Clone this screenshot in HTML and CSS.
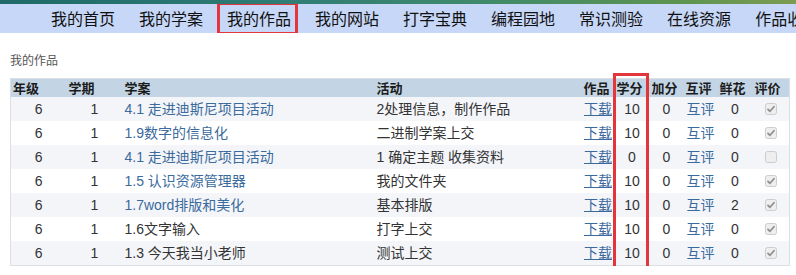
FILE: index.html
```html
<!DOCTYPE html>
<html lang="zh-CN">
<head>
<meta charset="utf-8">
<title>我的作品</title>
<link rel="stylesheet" href="styles.css">
</head>
<body>
<div class="topstrip"></div>
<nav class="nav">
  <a href="#">我的首页</a>
  <a href="#">我的学案</a>
  <a href="#" class="active">我的作品</a>
  <a href="#">我的网站</a>
  <a href="#">打字宝典</a>
  <a href="#">编程园地</a>
  <a href="#">常识测验</a>
  <a href="#">在线资源</a>
  <a href="#">作品收藏</a>
</nav>
<main class="content">
  <div class="crumb">我的作品</div>
  <div class="tablewrap">
    <table class="works">
      <colgroup>
        <col class="c1"><col class="c2"><col class="c3"><col class="c4"><col class="c5">
        <col class="c6"><col class="c7"><col class="c8"><col class="c9"><col class="c10">
      </colgroup>
      <thead>
        <tr><th>年级</th><th>学期</th><th>学案</th><th>活动</th><th>作品</th><th>学分</th><th>加分</th><th>互评</th><th>鲜花</th><th>评价</th></tr>
      </thead>
      <tbody>
        <tr><td class="num">6</td><td class="num">1</td><td class="txt"><a href="#">4.1 走进迪斯尼项目活动</a></td><td class="txt">2处理信息，制作作品</td><td class="num"><a href="#" class="u">下载</a></td><td class="num">10</td><td class="num">0</td><td class="num"><a href="#">互评</a></td><td class="num">0</td><td class="num"><svg class="chk" viewBox="0 0 12 12"><rect x=".5" y=".5" width="11" height="11" rx="2" class="box"/><path d="M3 6.3l2 2 4-4.6" class="tick"/></svg></td></tr>
        <tr><td class="num">6</td><td class="num">1</td><td class="txt"><a href="#">1.9数字的信息化</a></td><td class="txt">二进制学案上交</td><td class="num"><a href="#" class="u">下载</a></td><td class="num">10</td><td class="num">0</td><td class="num"><a href="#">互评</a></td><td class="num">0</td><td class="num"><svg class="chk" viewBox="0 0 12 12"><rect x=".5" y=".5" width="11" height="11" rx="2" class="box"/><path d="M3 6.3l2 2 4-4.6" class="tick"/></svg></td></tr>
        <tr><td class="num">6</td><td class="num">1</td><td class="txt"><a href="#">4.1 走进迪斯尼项目活动</a></td><td class="txt">1 确定主题 收集资料</td><td class="num"><a href="#" class="u">下载</a></td><td class="num">0</td><td class="num">0</td><td class="num"><a href="#">互评</a></td><td class="num">0</td><td class="num"><svg class="chk" viewBox="0 0 12 12"><rect x=".5" y=".5" width="11" height="11" rx="2" class="box"/></svg></td></tr>
        <tr><td class="num">6</td><td class="num">1</td><td class="txt"><a href="#">1.5 认识资源管理器</a></td><td class="txt">我的文件夹</td><td class="num"><a href="#" class="u">下载</a></td><td class="num">10</td><td class="num">0</td><td class="num"><a href="#">互评</a></td><td class="num">0</td><td class="num"><svg class="chk" viewBox="0 0 12 12"><rect x=".5" y=".5" width="11" height="11" rx="2" class="box"/><path d="M3 6.3l2 2 4-4.6" class="tick"/></svg></td></tr>
        <tr><td class="num">6</td><td class="num">1</td><td class="txt"><a href="#">1.7word排版和美化</a></td><td class="txt">基本排版</td><td class="num"><a href="#" class="u">下载</a></td><td class="num">10</td><td class="num">0</td><td class="num"><a href="#">互评</a></td><td class="num">2</td><td class="num"><svg class="chk" viewBox="0 0 12 12"><rect x=".5" y=".5" width="11" height="11" rx="2" class="box"/><path d="M3 6.3l2 2 4-4.6" class="tick"/></svg></td></tr>
        <tr><td class="num">6</td><td class="num">1</td><td class="txt">1.6文字输入</td><td class="txt">打字上交</td><td class="num"><a href="#" class="u">下载</a></td><td class="num">10</td><td class="num">0</td><td class="num"><a href="#">互评</a></td><td class="num">0</td><td class="num"><svg class="chk" viewBox="0 0 12 12"><rect x=".5" y=".5" width="11" height="11" rx="2" class="box"/><path d="M3 6.3l2 2 4-4.6" class="tick"/></svg></td></tr>
        <tr><td class="num">6</td><td class="num">1</td><td class="txt">1.3 今天我当小老师</td><td class="txt">测试上交</td><td class="num"><a href="#" class="u">下载</a></td><td class="num">10</td><td class="num">0</td><td class="num"><a href="#">互评</a></td><td class="num">0</td><td class="num"><svg class="chk" viewBox="0 0 12 12"><rect x=".5" y=".5" width="11" height="11" rx="2" class="box"/><path d="M3 6.3l2 2 4-4.6" class="tick"/></svg></td></tr>
      </tbody>
    </table>
    <div class="mark"></div>
  </div>
</main>
</body>
</html>
```
FILE: styles.css
```css
html, body {
  margin: 0;
  padding: 0;
  background: #ffffff;
  font-family: "Liberation Sans", "Noto Sans CJK SC", sans-serif;
  color: #333333;
  overflow: hidden;
}

.topstrip {
  height: 4px;
  background: linear-gradient(90deg, #1f6a68 0%, #2f7c76 35%, #3f8a6c 60%, #5c9350 85%, #7c9c52 100%);
}

.nav {
  display: flex;
  flex-wrap: nowrap;
  height: 29px;
  padding-left: 39px;
  background: #c7d7f7;
  white-space: nowrap;
  overflow: hidden;
}

.nav a {
  position: relative;
  flex: none;
  padding: 0 12px;
  font-family: "Noto Sans CJK SC", sans-serif;
  font-size: 16px;
  line-height: 29px;
  color: #111111;
  text-decoration: none;
}

.nav a.active::after {
  content: "";
  position: absolute;
  left: 2px;
  right: 5px;
  top: -2px;
  bottom: -2px;
  border: 3px solid #e3363c;
}

.content {
  padding: 0 10px;
}

.crumb {
  margin-top: 19px;
  font-family: "Noto Sans CJK SC", sans-serif;
  font-size: 12px;
  line-height: 16px;
  color: #555555;
}

.tablewrap {
  position: relative;
  margin-top: 10px;
  width: 779px;
}

.works {
  width: 779px;
  table-layout: fixed;
  border-collapse: collapse;
  border: 1px solid #dcdfe3;
  font-size: 14px;
}

.c1 { width: 56px; }
.c2 { width: 56px; }
.c3 { width: 252px; }
.c4 { width: 207px; }
.c5 { width: 33px; }
.c6 { width: 35px; }
.c7 { width: 34px; }
.c8 { width: 34px; }
.c9 { width: 35px; }
.c10 { width: 37px; }

.works th {
  height: 18px;
  padding: 0 0 0 2px;
  background: #c3d5e5;
  font-family: "Noto Sans CJK SC", sans-serif;
  font-weight: 700;
  font-size: 13px;
  line-height: 18px;
  color: #1c1c1c;
  text-align: left;
  white-space: nowrap;
  overflow: hidden;
}

.works td {
  height: 24px;
  padding: 0;
  font-size: 14px;
  line-height: 24px;
  white-space: nowrap;
  overflow: hidden;
  color: #333333;
}

.works tbody tr:nth-child(odd) td {
  background: #f3f5f9;
}

.works td.num {
  text-align: center;
}

.works td.txt {
  padding-left: 2px;
}

.works a {
  color: #3b6a9c;
  text-decoration: none;
}

.works a.u {
  text-decoration: underline;
}

.chk {
  display: inline-block;
  width: 12px;
  height: 12px;
  vertical-align: -1px;
  margin-left: 1px;
}

.chk .box {
  fill: #eeeeee;
  stroke: #cdcdcd;
  stroke-width: 1;
}

.chk .tick {
  fill: none;
  stroke: #8e8e8e;
  stroke-width: 1.7;
  stroke-linecap: round;
  stroke-linejoin: round;
}

.mark {
  position: absolute;
  left: 603px;
  top: -5px;
  width: 36px;
  height: 197px;
  box-sizing: border-box;
  border: 3px solid #e3363c;
  pointer-events: none;
}
```
